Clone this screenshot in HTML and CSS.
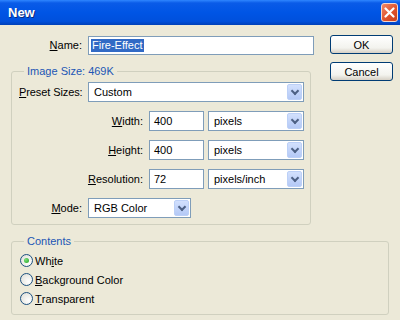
FILE: index.html
```html
<!DOCTYPE html>
<html lang="en">
<head>
    <meta charset="UTF-8">
    <title>New</title>
    <link rel="stylesheet" href="styles.css">
</head>
<body>
    <div class="window">
        <!-- Title bar -->
        <div class="titlebar">
            <span class="title">New</span>
            <span class="close">
                <svg width="11" height="11" viewBox="0 0 11 11"><path d="M1.5 1.5 L9.5 9.5 M9.5 1.5 L1.5 9.5" stroke="#fff" stroke-width="2.2" stroke-linecap="round"/></svg>
            </span>
        </div>

        <div class="top">
            <div class="left">
                <div class="row">
                    <label class="lbl"><u>N</u>ame:</label>
                    <div class="input name-input"><span class="sel">Fire-Effect</span></div>
                </div>

                <fieldset class="group size-group">
                    <legend>Image Size: 469K</legend>

                    <div class="row">
                        <label class="lbl left-al"><u>P</u>reset Sizes:</label>
                        <div class="combo preset">Custom<span class="drop"></span></div>
                    </div>
                    <div class="row">
                        <label class="lbl wide"><u>W</u>idth:</label>
                        <div class="input num">400</div>
                        <div class="combo unit">pixels<span class="drop"></span></div>
                    </div>
                    <div class="row">
                        <label class="lbl wide"><u>H</u>eight:</label>
                        <div class="input num">400</div>
                        <div class="combo unit">pixels<span class="drop"></span></div>
                    </div>
                    <div class="row">
                        <label class="lbl wide"><u>R</u>esolution:</label>
                        <div class="input num">72</div>
                        <div class="combo unit">pixels/inch<span class="drop"></span></div>
                    </div>
                    <div class="row">
                        <label class="lbl"><u>M</u>ode:</label>
                        <div class="combo mode">RGB Color<span class="drop"></span></div>
                    </div>
                </fieldset>
            </div>

            <div class="buttons">
                <button class="btn">OK</button>
                <button class="btn">Cancel</button>
            </div>
        </div>

        <fieldset class="group contents">
            <legend>Contents</legend>
            <div class="radio-row"><span class="radio checked"></span>Wh<u>i</u>te</div>
            <div class="radio-row"><span class="radio"></span><u>B</u>ackground Color</div>
            <div class="radio-row"><span class="radio"></span><u>T</u>ransparent</div>
        </fieldset>
    </div>
</body>
</html>
```

FILE: styles.css
```css
* {
    margin: 0;
    padding: 0;
    box-sizing: border-box;
}

body {
    font-family: "Liberation Sans", Arial, sans-serif;
    font-size: 11px;
    color: #000;
    background-color: #ece9d8;
}

.window {
    width: 400px;
    height: 320px;
    overflow: hidden;
}

/* Title bar */
.titlebar {
    height: 25px;
    display: flex;
    align-items: center;
    justify-content: space-between;
    padding: 0 2px 0 8px;
    background: linear-gradient(#2f86ff 0, #0a5be8 3px, #0055e5 50%, #0050dc 85%, #0040b8 100%);
}

.title {
    color: #fff;
    font-weight: bold;
    font-size: 13px;
    text-shadow: 1px 1px 0 #0a2b7a;
}

.close {
    width: 17px;
    height: 19px;
    display: flex;
    align-items: center;
    justify-content: center;
    border: 1px solid #f3d6cc;
    border-radius: 3px;
    background: linear-gradient(135deg, #f08a6a, #e0522c 55%, #c8401c);
}

/* Top area */
.top {
    display: flex;
    padding: 10px 0 0 11px;
}

.left {
    width: 303px;
}

.row {
    display: flex;
    align-items: center;
    height: 20px;
}

.row + .row {
    margin-top: 9px;
}

.lbl {
    width: 71px;
    flex-shrink: 0;
    white-space: nowrap;
    text-align: right;
    margin-right: 6px;
}

.group .lbl {
    width: 63px;
}

.group .lbl.left-al {
    text-align: left;
    letter-spacing: -0.1px;
}

.group .lbl.wide {
    width: 124px;
}

.input,
.combo {
    height: 20px;
    background: #fff;
    border: 1px solid #7f9db9;
    display: flex;
    align-items: center;
    padding-left: 4px;
}

.name-input {
    width: 226px;
    height: 19px;
    padding-left: 2px;
}

.sel {
    background: #316ac5;
    color: #fff;
    padding: 0 1px;
    line-height: 13px;
}

.combo {
    position: relative;
    padding-left: 5px;
}

.drop {
    position: absolute;
    right: 1px;
    top: 1px;
    width: 15px;
    height: 16px;
    border-radius: 2px;
    border: 1px solid #bcd0f7;
    background: linear-gradient(#d2e0fd, #b4c9f6);
}

.drop::after {
    content: "";
    position: absolute;
    left: 4px;
    top: 3px;
    width: 4px;
    height: 4px;
    border-right: 2px solid #4d6185;
    border-bottom: 2px solid #4d6185;
    transform: rotate(45deg);
}

.preset {
    width: 216px;
}

.num {
    width: 55px;
}

.unit {
    width: 96px;
    margin-left: 4px;
}

.mode {
    width: 103px;
}

/* Group boxes */
.group {
    border: 1px solid #d0d0bf;
    border-radius: 3px;
}

.group legend {
    color: #2256b5;
    padding: 0 3px;
    margin-left: 5px;
    line-height: 13px;
}

.size-group {
    width: 300px;
    margin-top: 10px;
    padding: 4px 0 6px 7px;
}

.buttons {
    display: flex;
    flex-direction: column;
    gap: 8px;
    margin-left: 16px;
}

.btn {
    width: 63px;
    height: 19px;
    font-family: inherit;
    font-size: 11px;
    color: #000;
    border: 1px solid #003c74;
    border-radius: 3px;
    background: linear-gradient(#ffffff, #f3f3ee 70%, #d6d0c5);
}

/* Contents */
.contents {
    width: 378px;
    margin: 10px 0 0 11px;
    padding: 3px 0 6px 8px;
}

.contents legend {
    margin-left: 4px;
}

.radio-row {
    display: flex;
    align-items: center;
    height: 19px;
}

.radio {
    width: 13px;
    height: 13px;
    border-radius: 50%;
    border: 1px solid #1c5180;
    background: radial-gradient(circle at 70% 70%, #fff, #dcdcd4);
    margin-right: 2px;
    display: flex;
    align-items: center;
    justify-content: center;
}

.radio.checked::after {
    content: "";
    width: 5px;
    height: 5px;
    border-radius: 50%;
    background: radial-gradient(circle at 35% 35%, #7ae07a, #21a121);
}
```
